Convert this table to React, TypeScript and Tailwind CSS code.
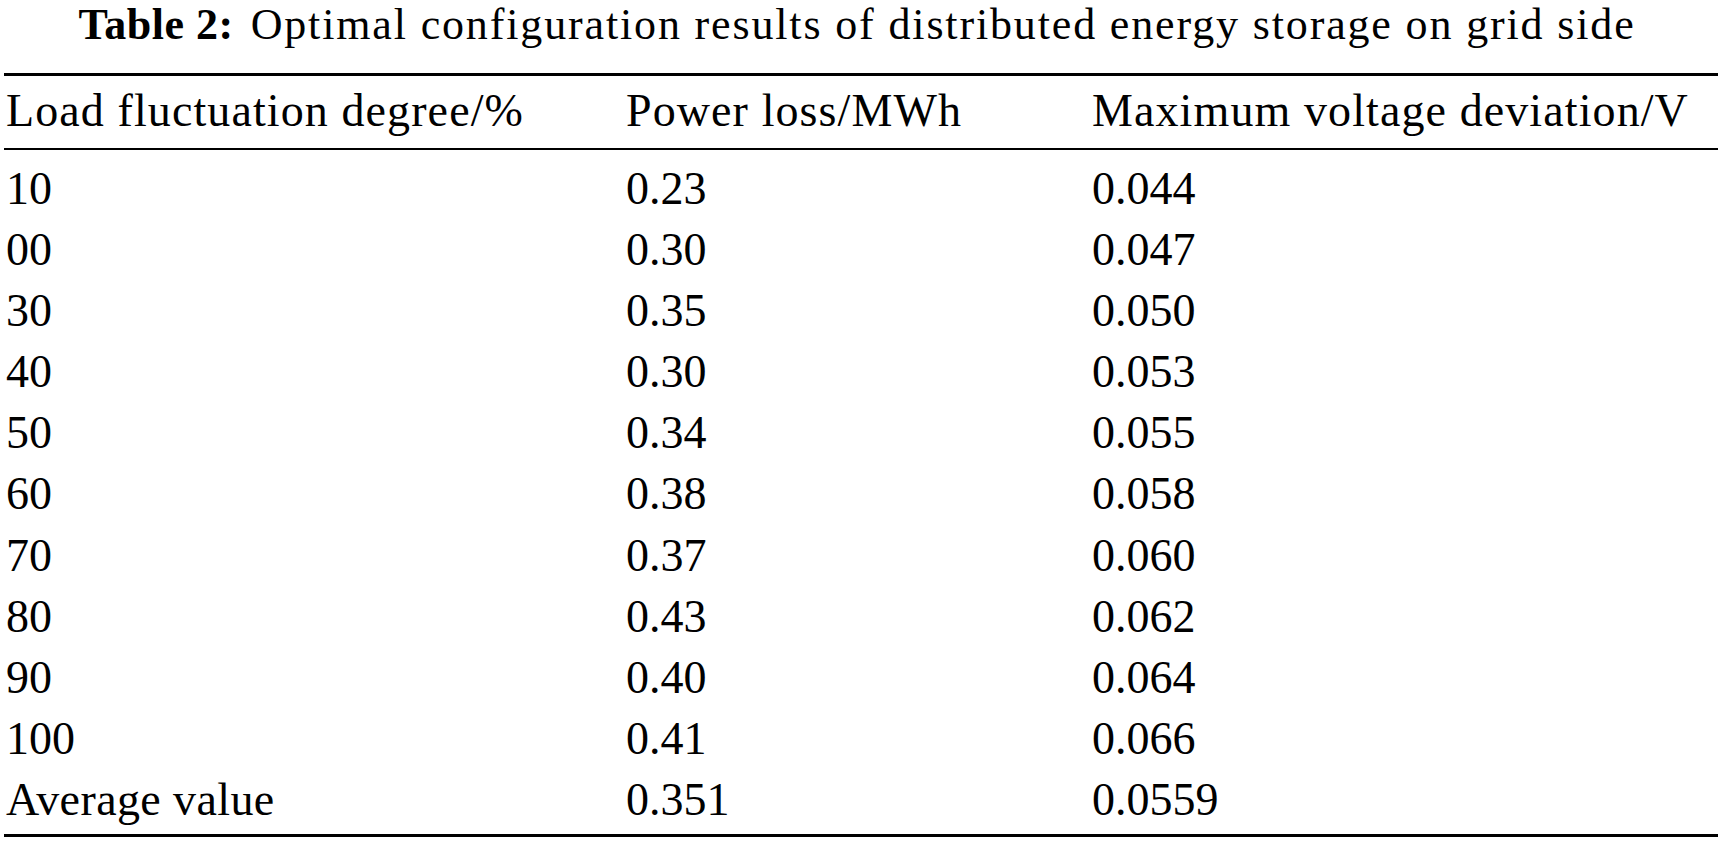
import React from "react";

const rows: [string, string, string][] = [
  ["10", "0.23", "0.044"],
  ["00", "0.30", "0.047"],
  ["30", "0.35", "0.050"],
  ["40", "0.30", "0.053"],
  ["50", "0.34", "0.055"],
  ["60", "0.38", "0.058"],
  ["70", "0.37", "0.060"],
  ["80", "0.43", "0.062"],
  ["90", "0.40", "0.064"],
  ["100", "0.41", "0.066"],
];

function Row({ cells, className }: { cells: [string, string, string]; className?: string }) {
  return (
    <div className={`grid grid-cols-[620px_466px_1fr] ${className ?? ""}`}>
      {cells.map((c, i) => (
        <div key={i} className="pl-[2px] whitespace-nowrap">
          {c}
        </div>
      ))}
    </div>
  );
}

export default function App() {
  return (
    <div
      className="w-[1721px] h-[842px] bg-white text-black overflow-hidden"
      style={{ fontFamily: '"Liberation Serif", "Times New Roman", serif' }}
    >
      <div className="flex justify-center pt-[3.5px] pr-[7px] text-[44px] leading-[42px] whitespace-nowrap">
        <span className="font-bold tracking-[0.5px]">Table 2:</span>
        <span className="pl-[17px] tracking-[1.85px]">Optimal configuration results of distributed energy storage on grid side</span>
      </div>

      <div className="ml-[4px] mr-[3px] mt-[27.5px] text-[46px] leading-[61px]">
        <div className="h-[2.5px] bg-black" />
        <Row
          cells={["Load fluctuation degree/%", "Power loss/MWh", "Maximum voltage deviation/V"]}
          className="pt-[4px] pb-[7px] tracking-[1.1px]"
        />
        <div className="h-[2.5px] bg-black" />
        <div className="pt-[8px] pb-[4px] leading-[61.1px]">
          {rows.map((r, i) => (
            <Row key={i} cells={r} />
          ))}
          <Row cells={["Average value", "0.351", "0.0559"]} className="[&>div:first-child]:tracking-[0.4px]" />
        </div>
        <div className="h-[3px] bg-black" />
      </div>
    </div>
  );
}
